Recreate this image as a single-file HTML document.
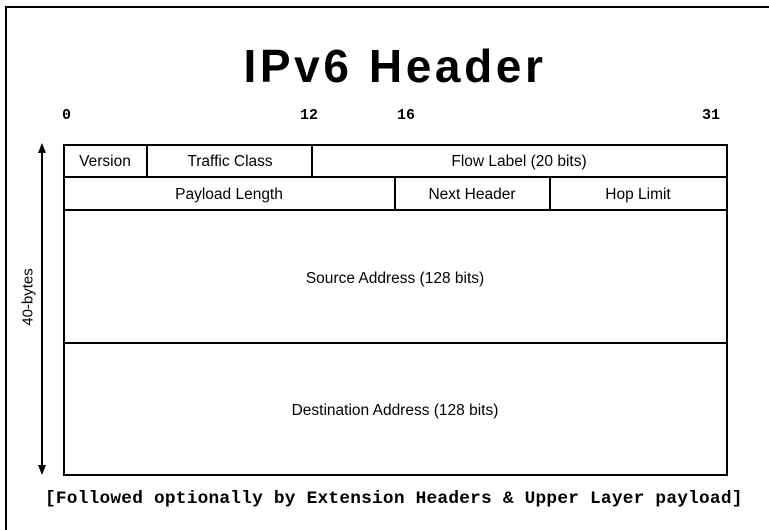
<!DOCTYPE html>
<html><head><style>
body{margin:0;width:769px;height:530px;background:#fff;position:relative;overflow:hidden;font-family:"Liberation Sans",sans-serif;color:#000}
.a{position:absolute}
.l{position:absolute;background:#000}
.t{position:absolute;font-size:15.5px;text-align:center;white-space:nowrap;transform:translateX(-50%)}
.n{position:absolute;font-family:"Liberation Mono",monospace;font-weight:bold;font-size:15px;top:107px}
</style></head><body>
<div class="l" style="left:5px;top:6px;width:764px;height:2px"></div>
<div class="l" style="left:5px;top:6px;width:2px;height:524px"></div>
<div class="a" style="left:0;width:790px;top:39px;text-align:center;font-size:46px;font-weight:bold;letter-spacing:3.6px">IPv6 Header</div>
<div class="n" style="left:62px">0</div>
<div class="n" style="left:300px">12</div>
<div class="n" style="left:397px">16</div>
<div class="n" style="left:702px">31</div>
<div class="a" style="left:63px;top:144px;width:661px;height:328px;border:2px solid #000"></div>
<div class="l" style="left:63px;top:176px;width:664px;height:2px"></div>
<div class="l" style="left:63px;top:209px;width:664px;height:2px"></div>
<div class="l" style="left:63px;top:342px;width:664px;height:2px"></div>
<div class="l" style="left:146px;top:144px;width:2px;height:33px"></div>
<div class="l" style="left:311px;top:144px;width:2px;height:33px"></div>
<div class="l" style="left:394px;top:177px;width:2px;height:33px"></div>
<div class="l" style="left:549px;top:177px;width:2px;height:33px"></div>
<div class="t" style="left:105px;top:153px">Version</div>
<div class="t" style="left:230px;top:153px">Traffic Class</div>
<div class="t" style="left:519px;top:153px">Flow Label (20 bits)</div>
<div class="t" style="left:229px;top:186px">Payload Length</div>
<div class="t" style="left:472px;top:186px">Next Header</div>
<div class="t" style="left:638px;top:186px">Hop Limit</div>
<div class="t" style="left:395px;top:270px">Source Address (128 bits)</div>
<div class="t" style="left:395px;top:402px">Destination Address (128 bits)</div>
<svg class="a" style="left:30px;top:140px" width="24" height="340">
<line x1="12" y1="8" x2="12" y2="330" stroke="#000" stroke-width="2"/>
<path d="M8 13 L12 3 L16 13 Z" fill="#000"/>
<path d="M8 325 L12 335 L16 325 Z" fill="#000"/>
</svg>
<div class="a" style="left:28px;top:297px;font-size:15px;transform:translate(-50%,-50%) rotate(-90deg);white-space:nowrap">40-bytes</div>
<div class="a" style="left:45px;top:489px;font-family:'Liberation Mono',monospace;font-weight:bold;font-size:17.8px;letter-spacing:0.23px;white-space:nowrap">[Followed optionally by Extension Headers &amp; Upper Layer payload]</div>
</body></html>
